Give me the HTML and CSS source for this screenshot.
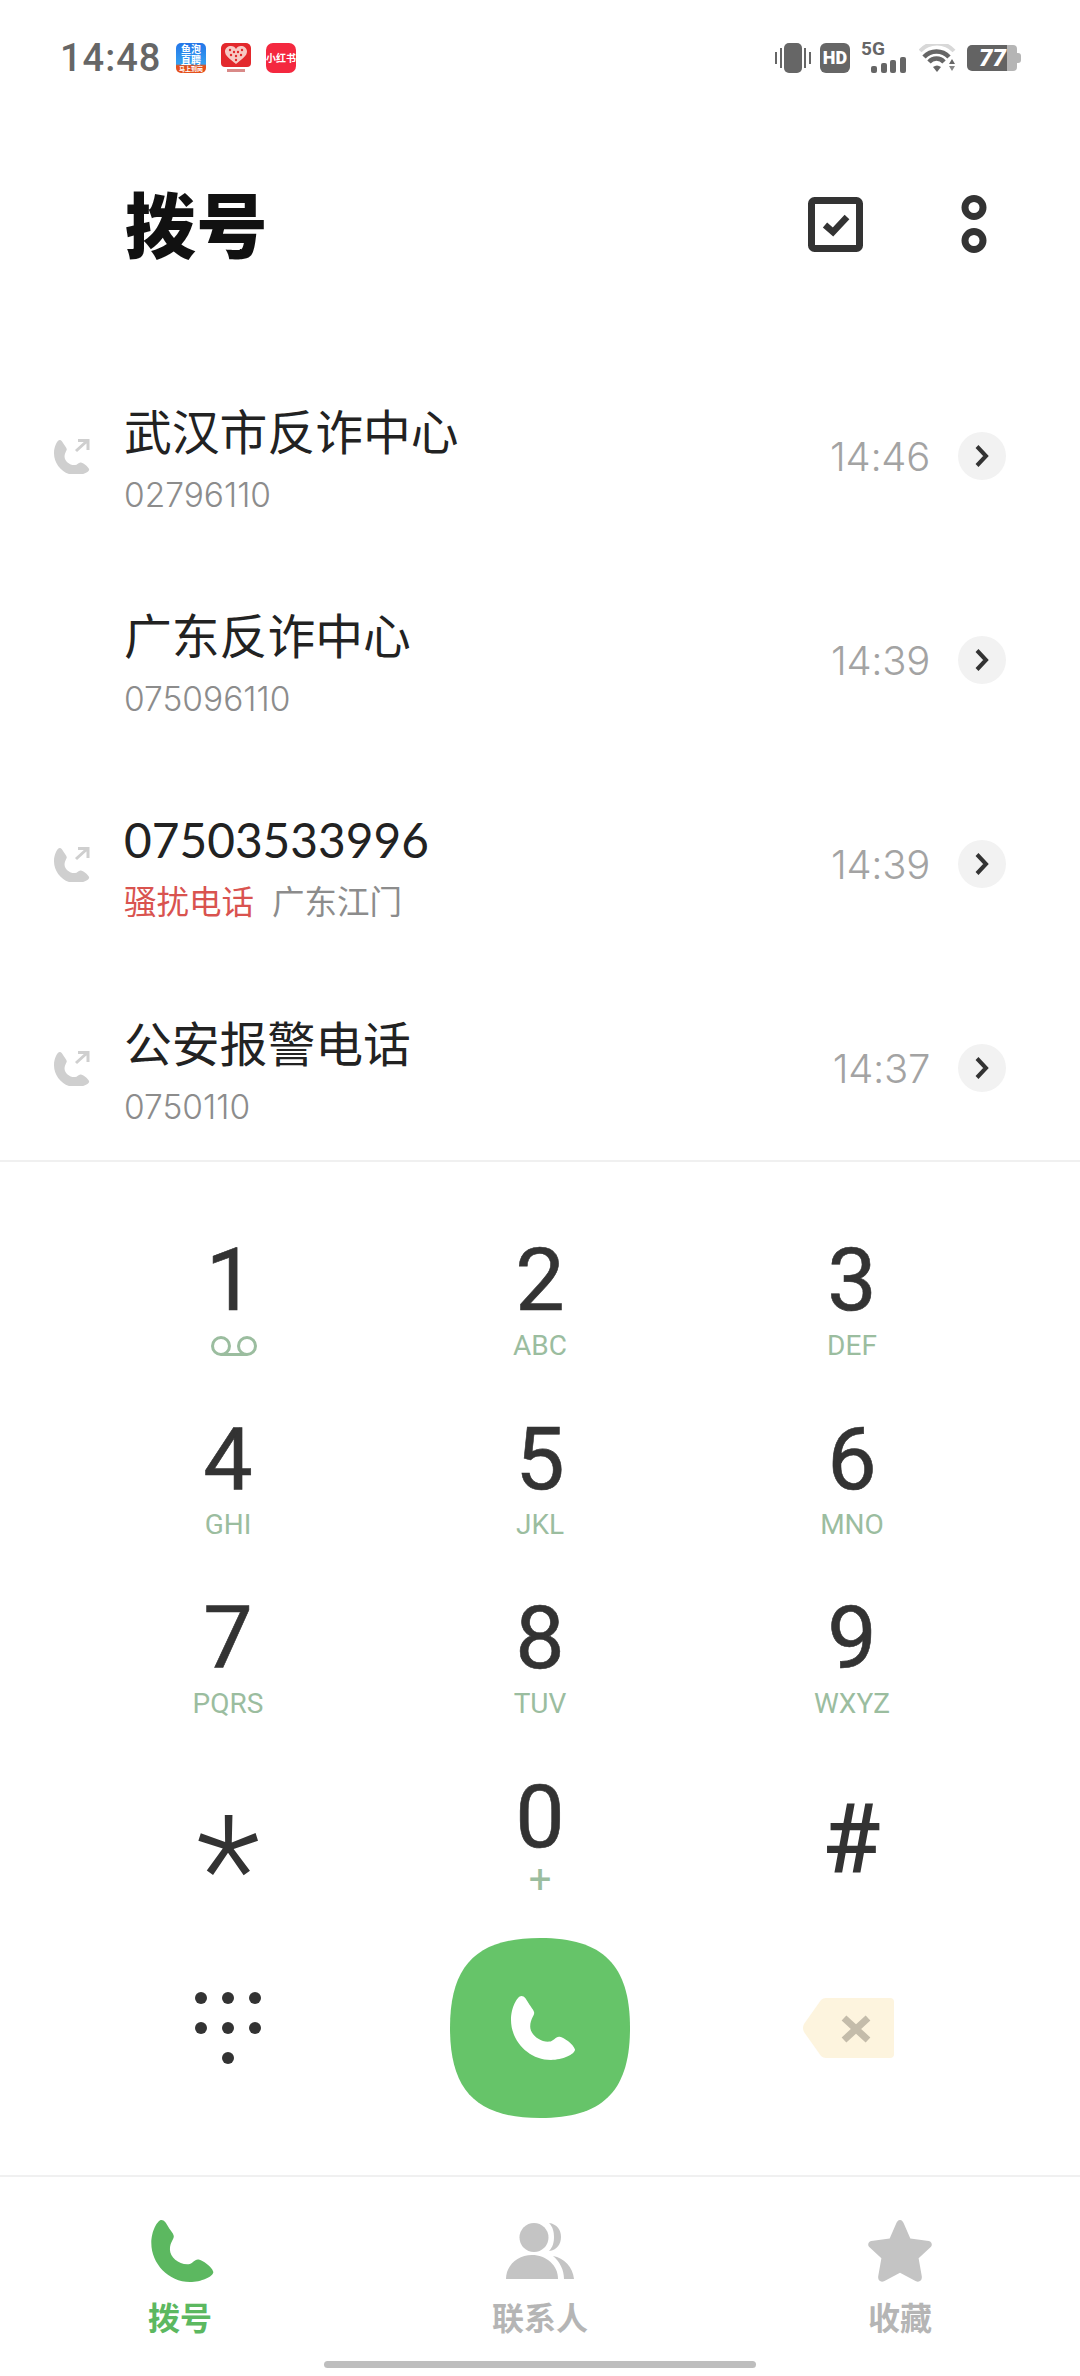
FILE: index.html
```html
<!DOCTYPE html>
<html lang="zh">
<head>
<meta charset="utf-8">
<title>拨号</title>
<link rel="stylesheet" href="styles.css">
</head>
<body>
<svg class="defs" width="0" height="0" aria-hidden="true">
  <defs>
    <path id="handset" d="M6.500 0C8.500 0 9.500 2 11 4.500C12.500 7 14.500 9 14.500 10.500C14.500 12.500 12 14.500 12 19C12 24 18 29 24 28.500C26.500 28.500 28 25 30.500 25.500C33 26 39 30 40 33.500C40 36.500 32 40 25 40C11 40 0 28 0 15C0 7 4 0 6.500 0Z"/>
    <g id="outgoing"><use href="#handset" transform="translate(0 2) scale(.88)"/><path d="M22 13L33 3M24 2.500H34V12" fill="none" stroke="#cfcfcf" stroke-width="3"/></g>
  </defs>
</svg>
<main class="phone">
  <header class="status">
    <div class="status-left">
      <span class="clock">14:48</span>
      <span class="app app-blue"><span>鱼泡</span><span>直聘</span><span class="app-foot">马上到岗</span></span>
      <svg class="app" viewBox="0 0 30 30"><rect width="30" height="24" rx="4" fill="#e3282c"/><path d="M15 21C9 16 4 13 4 8.500C4 5 7 3 10 3C12.500 3 14 4 15 6C16 4 17.500 3 20 3C23 3 26 5 26 8.500C26 13 21 16 15 21Z" fill="#f7c9c4"/><g fill="#e3282c"><circle cx="9" cy="7" r="1.200"/><circle cx="13" cy="9" r="1.200"/><circle cx="17" cy="9" r="1.200"/><circle cx="21" cy="7" r="1.200"/><circle cx="10" cy="12" r="1.200"/><circle cx="15" cy="13" r="1.200"/><circle cx="20" cy="12" r="1.200"/><circle cx="15" cy="17" r="1.200"/></g><rect x="6" y="26" width="18" height="3" fill="#d98a88"/></svg>
      <span class="app app-red">小红书</span>
    </div>
    <div class="status-right">
      <svg class="ic-vib" viewBox="0 0 36 30"><rect x="9" y="0" width="18" height="30" rx="5"/><rect x="0" y="9" width="2" height="12"/><rect x="5" y="5" width="2" height="20"/><rect x="29" y="5" width="2" height="20"/><rect x="34" y="9" width="2" height="12"/></svg>
      <span class="ic-hd">HD</span>
      <span class="ic-signal"><span class="ic-5g">5G</span><svg viewBox="0 0 35 16"><rect x="0" y="9" width="6" height="7" rx="2"/><rect x="10" y="6" width="6" height="10" rx="2"/><rect x="19" y="3" width="6" height="13" rx="2"/><rect x="29" y="0" width="6" height="16" rx="2"/></svg></span>
      <svg class="ic-wifi" viewBox="0 0 37 28"><path d="M1 7A23 23 0 0 1 35 7" fill="none" stroke="#d8d8d8" stroke-width="4"/><path d="M5 13A17 17 0 0 1 30 13" fill="none" stroke="#666" stroke-width="4.500"/><path d="M10 18A10 10 0 0 1 25 18" fill="none" stroke="#666" stroke-width="4.500"/><path d="M14 23L18 28L22 23Q18 20 14 23Z" fill="#666"/><path d="M30 20L33 15L36 20Z" fill="#666"/><path d="M30 22L33 27L36 22Z" fill="#888"/></svg>
      <span class="ic-batt"><span class="batt-fill">77</span><span class="batt-rest"></span><span class="batt-cap"></span></span>
    </div>
  </header>

  <section class="title-bar">
    <h1 class="title">拨号</h1>
    <div class="title-actions">
      <svg class="ic-check" viewBox="0 0 55 55"><rect x="3.500" y="3.500" width="48" height="48" rx="3" fill="none" stroke="#333" stroke-width="7"/><path d="M17 28L25 35L39 20" fill="none" stroke="#333" stroke-width="6.500"/></svg>
      <svg class="ic-more" viewBox="0 0 26 58"><circle cx="13" cy="12.500" r="9" fill="none" stroke="#333" stroke-width="7"/><circle cx="13" cy="45.500" r="9" fill="none" stroke="#333" stroke-width="7"/></svg>
    </div>
  </section>

  <section class="calls">
    <article class="call">
      <svg class="call-type" viewBox="0 0 36 36"><use href="#outgoing"/></svg>
      <div class="call-main"><div class="call-name">武汉市反诈中心</div><div class="call-sub">02796110</div></div>
      <span class="call-time">14:46</span>
      <span class="chev"><svg viewBox="0 0 16 24"><path d="M3 2.500L12 12L3 21.500" fill="none" stroke="#333" stroke-width="4"/></svg></span>
    </article>
    <article class="call">
      <span class="call-type"></span>
      <div class="call-main"><div class="call-name">广东反诈中心</div><div class="call-sub">075096110</div></div>
      <span class="call-time">14:39</span>
      <span class="chev"><svg viewBox="0 0 16 24"><path d="M3 2.500L12 12L3 21.500" fill="none" stroke="#333" stroke-width="4"/></svg></span>
    </article>
    <article class="call">
      <svg class="call-type" viewBox="0 0 36 36"><use href="#outgoing"/></svg>
      <div class="call-main"><div class="call-name">07503533996</div><div class="call-sub call-sub-cn"><span class="spam">骚扰电话</span><span>广东江门</span></div></div>
      <span class="call-time">14:39</span>
      <span class="chev"><svg viewBox="0 0 16 24"><path d="M3 2.500L12 12L3 21.500" fill="none" stroke="#333" stroke-width="4"/></svg></span>
    </article>
    <article class="call">
      <svg class="call-type" viewBox="0 0 36 36"><use href="#outgoing"/></svg>
      <div class="call-main"><div class="call-name">公安报警电话</div><div class="call-sub">0750110</div></div>
      <span class="call-time">14:37</span>
      <span class="chev"><svg viewBox="0 0 16 24"><path d="M3 2.500L12 12L3 21.500" fill="none" stroke="#333" stroke-width="4"/></svg></span>
    </article>
  </section>

  <section class="keypad">
    <div class="key"><span class="digit digit-one">1</span><svg class="vm" viewBox="0 0 46 20"><ellipse cx="10" cy="10" rx="8.500" ry="8.500"/><ellipse cx="36" cy="10" rx="8.500" ry="8.500"/><path d="M10 18.500H36"/></svg></div>
    <div class="key"><span class="digit">2</span><span class="letters">ABC</span></div>
    <div class="key"><span class="digit">3</span><span class="letters">DEF</span></div>
    <div class="key"><span class="digit">4</span><span class="letters">GHI</span></div>
    <div class="key"><span class="digit">5</span><span class="letters">JKL</span></div>
    <div class="key"><span class="digit">6</span><span class="letters">MNO</span></div>
    <div class="key"><span class="digit">7</span><span class="letters">PQRS</span></div>
    <div class="key"><span class="digit">8</span><span class="letters">TUV</span></div>
    <div class="key"><span class="digit">9</span><span class="letters">WXYZ</span></div>
    <div class="key"><span class="digit digit-star">*</span></div>
    <div class="key"><span class="digit">0</span><span class="letters letters-plus">+</span></div>
    <div class="key"><span class="digit digit-hash">#</span></div>
  </section>

  <section class="actions">
    <div class="action"><svg class="ic-dots" viewBox="0 0 66 72"><g fill="#333"><circle cx="6" cy="6" r="6"/><circle cx="33" cy="6" r="6"/><circle cx="60" cy="6" r="6"/><circle cx="6" cy="36" r="6"/><circle cx="33" cy="36" r="6"/><circle cx="60" cy="36" r="6"/><circle cx="33" cy="66" r="6"/></g></svg></div>
    <div class="action"><svg class="ic-call" viewBox="0 0 180 180"><path d="M90 0C153 0 180 27 180 90C180 153 153 180 90 180C27 180 0 153 0 90C0 27 27 0 90 0Z" fill="#66c469"/><use href="#handset" fill="#fff" transform="translate(61 58) scale(1.6)"/></svg></div>
    <div class="action"><svg class="ic-back" viewBox="0 0 92 60"><path d="M24 0H88Q92 0 92 4V56Q92 60 88 60H24Q21 60 19 58L2 34Q0 30 2 26L19 2Q21 0 24 0Z" fill="#fdf4de"/><path d="M42 20L66 42M66 20L42 42" stroke="#c4bcaa" stroke-width="7"/></svg></div>
  </section>

  <nav class="tabs">
    <div class="tab tab-on"><svg viewBox="-1.500 0 40 40"><use href="#handset"/></svg><span>拨号</span></div>
    <div class="tab"><svg viewBox="0 0 68 56"><circle cx="28" cy="14.500" r="14.500"/><path d="M43 0C51 1 55 7 55 14C55 21 51 27 43 28C47 24 48 19 48 14C48 9 47 4 43 0Z"/><path d="M0 56C0 42 12 32 26 32C40 32 52 42 52 56Z"/><path d="M47 33C58 35 67 44 68 56H58C58 47 54 39 47 33Z"/></svg><span>联系人</span></div>
    <div class="tab"><svg viewBox="1 1 62 60"><path d="M32 1C34 1 35 3 36 5L42 19L58 21C62 21 64 24 62 27L50 38L53 55C54 60 50 62 47 60L32 52L17 60C14 62 10 60 11 55L14 38L2 27C0 24 2 21 6 21L22 19L28 5C29 3 30 1 32 1Z"/></svg><span>收藏</span></div>
  </nav>
  <div class="home-row"><span class="home-bar"></span></div>
</main>
</body>
</html>
```
FILE: styles.css
```css
* { box-sizing: border-box; }
html, body { margin: 0; padding: 0; background: #fff; }
body { font-family: "Noto Sans CJK SC", "Noto Sans", sans-serif; }
.defs { position: absolute; }
.phone { width: 1080px; height: 2376px; overflow: hidden; display: flex; flex-direction: column; }

.status { height: 116px; padding: 43px 59px 0 60px; display: flex; justify-content: space-between; align-items: flex-start; }
.status-left, .status-right { display: flex; align-items: center; height: 30px; }
.clock { font-family: Roboto, sans-serif; font-weight: 500; font-size: 38px; color: #666; letter-spacing: 1px; width: 116px; }
.app { width: 30px; height: 30px; margin-right: 15px; display: block; flex: none; border-radius: 5px; }
.app-blue { background: linear-gradient(#2475e8, #35a0f0 70%, #e5501c 76%); color: #fff; font-size: 10px; line-height: 11px; font-weight: 700; display: flex; flex-direction: column; align-items: center; }
.app-foot { font-size: 6px; line-height: 7px; }
.app-red { background: #f4283f; color: #fff; font-size: 10px; font-weight: 700; line-height: 30px; text-align: center; white-space: nowrap; border-radius: 7px; }

.status-right { gap: 9px; }
.status-right svg { display: block; fill: #666; }
.ic-vib { width: 36px; height: 30px; }
.ic-hd { width: 30px; height: 30px; border-radius: 6px; background: #666; color: #fff; font-family: Roboto, sans-serif; font-size: 18px; font-weight: 900; line-height: 30px; text-align: center; }
.ic-signal { width: 45px; height: 30px; margin: 0 4px 0 2px; position: relative; }
.ic-5g { position: absolute; left: 0; top: -4px; font-family: Roboto, sans-serif; font-size: 19px; line-height: 20px; font-weight: 700; color: #666; }
.ic-signal svg { position: absolute; right: 0; bottom: 0; width: 35px; height: 16px; }
.ic-wifi { width: 37px; height: 28px; margin-right: 2px; }
.ic-batt { width: 54px; height: 26px; display: flex; align-items: center; }
.batt-fill { width: 40px; height: 26px; border-radius: 5px 0 0 5px; background: #636363; color: #fff; font-family: Roboto, sans-serif; font-style: italic; font-weight: 900; font-size: 24px; line-height: 26px; text-align: right; padding-right: 1px; }
.batt-rest { width: 10px; height: 26px; border-radius: 0 4px 4px 0; background: #b5b5b5; }
.batt-cap { width: 4px; height: 10px; border-radius: 0 3px 3px 0; background: #b5b5b5; }

.title-bar { height: 238px; padding: 0 93px 22px 125px; display: flex; justify-content: space-between; align-items: center; }
.title { margin: 0 0 6px; font-size: 71px; line-height: 90px; font-weight: 900; color: #111; letter-spacing: .5px; }
.title-actions { display: flex; align-items: center; gap: 98px; }
.ic-check { width: 55px; height: 55px; display: block; }
.ic-more { width: 26px; height: 58px; display: block; }

.calls { height: 808px; overflow: hidden; border-bottom: 2px solid #f0f0f0; }
.call { height: 204px; padding: 0 74px 0 54px; display: flex; align-items: center; }
.call-type { width: 36px; height: 36px; flex: none; fill: #cfcfcf; margin-right: 34px; }
.call-main { flex: 1; display: flex; flex-direction: column; gap: 14px; padding-top: 8px; }
.call-name { font-size: 47.800px; line-height: 56px; color: #222; font-family: Lato, "Noto Sans CJK SC", sans-serif; }
.call-sub { font-size: 33.500px; line-height: 42px; color: #8c8c8c; font-family: Inter, "Noto Sans CJK SC", sans-serif; font-weight: 300; display: flex; gap: 18px; }
.call-sub-cn { font-size: 32.500px; font-weight: 400; }
.spam { color: #d9534f; }
.call-time { font-family: Inter, sans-serif; font-weight: 300; font-size: 40px; letter-spacing: -.3px; color: #a3a3a3; margin-right: 28px; }
.chev { width: 48px; height: 48px; border-radius: 50%; background: #f2f2f2; display: flex; align-items: center; justify-content: center; }
.chev svg { width: 16px; height: 24px; display: block; }

.keypad { padding: 73px 72px 0; display: grid; grid-template-columns: repeat(3, 312px); grid-template-rows: repeat(3, 179px) 150px; }
.key { display: flex; flex-direction: column; align-items: center; }
.digit { font-family: Roboto, sans-serif; font-size: 88px; line-height: 90px; color: #333; -webkit-text-stroke: .6px #333; }
.digit-one { margin-left: 5px; }
.digit-star { font-size: 150px; line-height: 90px; font-weight: 300; padding-top: 54px; -webkit-text-stroke: 0; }
.digit-hash { font-size: 96px; padding-top: 22px; font-weight: 500; -webkit-text-stroke: 0; }
.letters { font-family: Roboto, sans-serif; font-size: 28px; line-height: 34px; color: #9bbd9f; margin-top: 4px; }
.letters-plus { font-size: 40px; line-height: 24px; margin-top: 6px; }
.vm { width: 46px; height: 20px; margin-top: 11px; margin-left: 12px; fill: none; stroke: #9bbd9f; stroke-width: 3; }

.actions { height: 196px; padding: 0 72px; display: grid; grid-template-columns: repeat(3, 312px); margin-top: 8px; }
.action { display: flex; align-items: center; justify-content: center; }
.ic-dots { width: 66px; height: 72px; display: block; }
.ic-call { width: 180px; height: 180px; display: block; }
.ic-back { width: 92px; height: 60px; display: block; margin-left: -8px; }

.tabs { margin-top: 49px; border-top: 2px solid #f0f0f0; padding: 43px 0 0; display: grid; grid-template-columns: 360px 360px 360px; }
.tab { display: flex; flex-direction: column; align-items: center; gap: 14px; color: #b5b5b5; font-size: 32px; line-height: 40px; font-weight: 700; }
.tab svg { height: 62px; width: 68px; fill: #c4c4c4; display: block; }
.tab-on { color: #5cb860; }
.tab-on svg { fill: #5cb860; }
.home-row { display: flex; justify-content: center; margin-top: 25px; }
.home-bar { width: 432px; height: 7px; border-radius: 4px; background: #bebebe; display: block; }
```
